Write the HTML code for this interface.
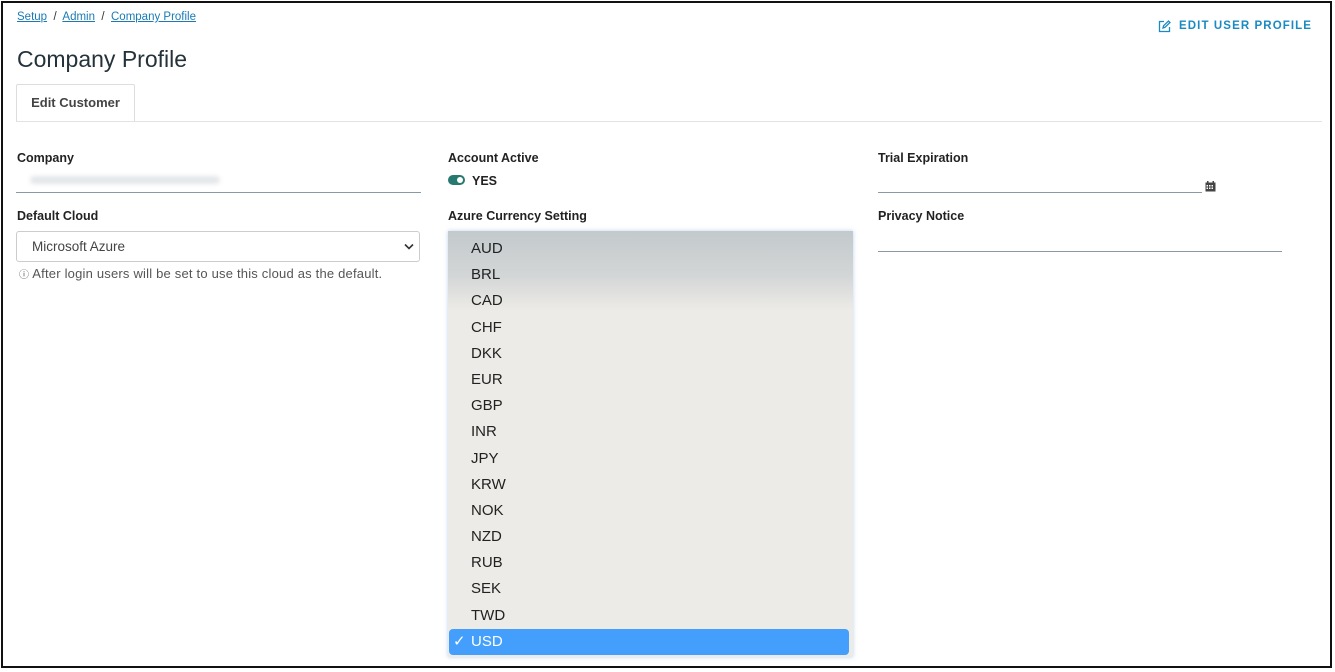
<!DOCTYPE html>
<html><head><meta charset="utf-8"><style>
*{box-sizing:border-box;margin:0;padding:0}
html,body{width:1335px;height:672px;overflow:hidden;background:#fff;font-family:"Liberation Sans",sans-serif;color:#1c2a33}
.frame{position:absolute;left:1px;top:1px;width:1331px;height:667px;border:2px solid #111}
.abs{position:absolute}
.bc{left:17px;top:11px;font-size:11.5px;color:#333}
.bc a{color:#1a7ab5;text-decoration:underline}
h1{position:absolute;left:17px;top:46px;font-size:23px;font-weight:400;color:#24323b}
.tab{left:16px;top:84px;width:119px;height:38px;border:1px solid #ddd;border-bottom:none;background:#fff;font-size:13px;font-weight:bold;color:#444;text-align:center;line-height:36px;border-radius:2px 2px 0 0}
.tabline{left:16px;top:121px;width:1306px;height:1px;background:#e2e2e2}
.lbl{font-size:12.5px;font-weight:bold;color:#222}
.uline{height:1px;background:#8a9aa3}
.sel{left:16px;top:231px;width:404px;height:31px;border:1px solid #ccc;border-radius:3px;font-size:13.5px;color:#444;padding-left:15px;line-height:29px}
.hint{left:19px;top:266px;font-size:13px;color:#555;letter-spacing:0.2px}
.edit{left:1179px;top:20px;font-size:11.5px;font-weight:bold;letter-spacing:1.1px;color:#1a8ac2}
.dd{left:448px;top:231px;width:405px;height:426px;padding-top:5px;background:linear-gradient(#c3c9cc 0px,#d3d6d6 45px,#edebe7 80px,#edebe7 100%);box-shadow:0 0 4px rgba(120,170,220,.5)}
.dd div{height:26.2px;line-height:26.2px;font-size:15px;color:#222;padding-left:23px}
.dd .on{background:#439ffb;color:#fff;border-radius:4px;margin:0 4px 0 1px;padding-left:22px;position:relative}
.blur{left:30px;top:176px;width:190px;height:8px;background:#e4e7e9;border-radius:4px;filter:blur(2px)}
</style></head><body>
<div class="frame"></div>
<div class="abs bc"><a>Setup</a> &nbsp;/&nbsp; <a>Admin</a> &nbsp;/&nbsp; <a>Company Profile</a></div>
<svg class="abs" width="13" height="13" viewBox="0 0 13 13" style="left:1158px;top:20px" fill="none" stroke="#1a8ac2" stroke-width="1.3"><path d="M6 1.5H1.5v10h10V7"/><path d="M5 8l.5-2.2L10.5 1l1.5 1.5-5 4.8z"/></svg>
<div class="abs edit">EDIT USER PROFILE</div>
<h1>Company Profile</h1>
<div class="abs tab">Edit Customer</div>
<div class="abs tabline"></div>

<div class="abs lbl" style="left:17px;top:151px">Company</div>
<div class="abs blur"></div>
<div class="abs uline" style="left:16px;top:192px;width:405px"></div>
<div class="abs lbl" style="left:17px;top:209px">Default Cloud</div>
<div class="abs sel">Microsoft Azure<svg width="10" height="7" viewBox="0 0 10 7" style="position:absolute;right:5px;top:11px" fill="none" stroke="#333" stroke-width="1.6"><path d="M1 1.5l4 4 4-4"/></svg></div>
<div class="abs hint"><span style="font-size:10px">ⓘ</span> After login users will be set to use this cloud as the default.</div>

<div class="abs lbl" style="left:448px;top:151px">Account Active</div>
<div class="abs" style="left:448px;top:175px;width:17px;height:10px;border-radius:5px;background:#27796f"><div style="position:absolute;right:2px;top:2px;width:6px;height:6px;border-radius:50%;background:#fff"></div></div>
<div class="abs lbl" style="left:472px;top:174px">YES</div>
<div class="abs lbl" style="left:448px;top:209px">Azure Currency Setting</div>
<div class="abs dd">
<div>AUD</div><div>BRL</div><div>CAD</div><div>CHF</div><div>DKK</div><div>EUR</div><div>GBP</div><div>INR</div><div>JPY</div><div>KRW</div><div>NOK</div><div>NZD</div><div>RUB</div><div>SEK</div><div>TWD</div>
<div class="on"><span style="position:absolute;left:4px">✓</span>USD</div>
</div>

<div class="abs lbl" style="left:878px;top:151px">Trial Expiration</div>
<div class="abs uline" style="left:878px;top:192px;width:324px"></div>
<svg class="abs" style="left:1205px;top:181px" width="11" height="11" viewBox="0 0 11 11"><rect x="0.5" y="1.5" width="10" height="9" fill="#444"/><rect x="2" y="0" width="1.5" height="3" fill="#444"/><rect x="7.5" y="0" width="1.5" height="3" fill="#444"/><g fill="#fff"><rect x="1.5" y="4" width="1.5" height="1.5"/><rect x="4" y="4" width="1.5" height="1.5"/><rect x="6.5" y="4" width="1.5" height="1.5"/><rect x="1.5" y="6.5" width="1.5" height="1.5"/><rect x="4" y="6.5" width="1.5" height="1.5"/><rect x="6.5" y="6.5" width="1.5" height="1.5"/></g></svg>
<div class="abs lbl" style="left:878px;top:209px">Privacy Notice</div>
<div class="abs uline" style="left:878px;top:251px;width:404px"></div>
</body></html>
